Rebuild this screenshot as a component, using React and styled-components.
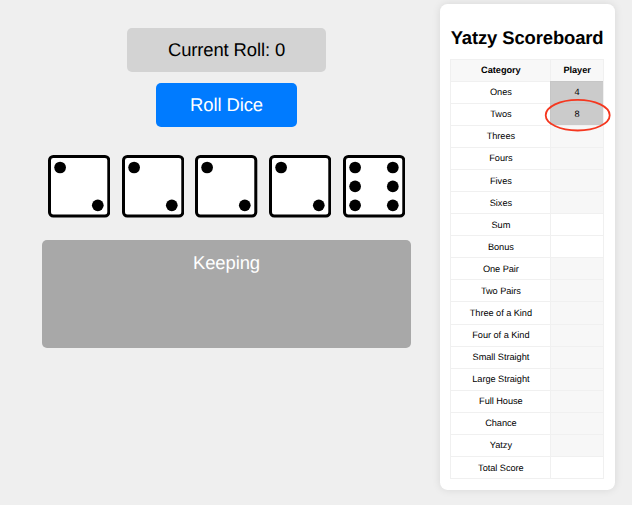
import React from "react";
import styled, { createGlobalStyle } from "styled-components";

const GlobalStyle = createGlobalStyle`
  *, *::before, *::after { box-sizing: border-box; }
  body {
    margin: 0;
    background: #efefef;
    color: #000;
    font-family: "Liberation Sans", Arial, Helvetica, sans-serif;
    text-rendering: geometricPrecision;
  }
`;

const Page = styled.div`
  display: flex;
  align-items: flex-start;
  width: 632px;
  height: 505px;
  overflow: hidden;
  background: #efefef;
`;

const Game = styled.main`
  display: flex;
  flex-direction: column;
  align-items: center;
  width: 369px;
  margin: 28.3px 28.5px 0 42px;
`;

const RollCounter = styled.div`
  width: 199px;
  height: 43.7px;
  border-radius: 5px;
  background: #d3d3d3;
  font-size: 18.46px;
  letter-spacing: -0.12px;
  line-height: 44px;
  text-align: center;
`;

const RollButton = styled.button`
  width: 141px;
  height: 44px;
  margin-top: 11px;
  padding: 0;
  border: 0;
  border-radius: 5px;
  background: #007bff;
  color: #fff;
  font: 18.46px/44px "Liberation Sans", Arial, sans-serif;
  letter-spacing: -0.1px;
  text-rendering: inherit;
`;

const DiceRow = styled.div`
  display: flex;
  gap: 11.5px;
  margin-top: 28px;
`;

const DieFace = styled.svg`
  display: block;
  width: 62.3px;
  height: 62.6px;
`;

const Keeping = styled.section`
  width: 100%;
  height: 108px;
  margin-top: 22.7px;
  padding-top: 12px;
  border-radius: 5px;
  background: #a8a8a8;
  color: #fff;
  font-size: 18.46px;
  letter-spacing: -0.1px;
  line-height: 21px;
  text-align: center;
`;

const Scoreboard = styled.aside`
  width: 175.3px;
  height: 486.3px;
  margin-top: 4px;
  padding: 23px 11px 0 10.9px;
  border-radius: 7.4px;
  background: #fff;
  box-shadow: 0 0 9px rgba(0, 0, 0, 0.1);
`;

const Title = styled.h1`
  margin: 0;
  height: 31.6px;
  font-size: 18.46px;
  letter-spacing: -0.12px;
  line-height: 22px;
  text-align: center;
  white-space: nowrap;
`;

const Table = styled.div`
  border: solid #f0f0f0;
  border-width: 0 1px 1px 0;
`;

const Row = styled.div`
  display: grid;
  grid-template-columns: 100px 1fr;
  height: 22.08px;
  font-size: 9.23px;
  letter-spacing: -0.05px;
  font-weight: ${({ $header }) => ($header ? 700 : 400)};
`;

const fills = { header: "#f8f8f8", open: "#f7f7f7", scored: "#cbcbcb", plain: "#fff" };

const Cell = styled.div`
  position: relative;
  display: flex;
  align-items: center;
  justify-content: center;
  border: solid ${({ $fill }) => ($fill === "scored" ? "#c6c6c6" : "#f0f0f0")};
  border-width: 1px 0 0 1px;
  background: ${({ $fill }) => fills[$fill]};
`;

const Highlight = styled.svg`
  position: absolute;
  z-index: 1;
  left: -7px;
  top: -8px;
  width: 68px;
  height: 36px;
  overflow: visible;
`;

const pips = {
  2: [[12.1, 12.5], [49.8, 50.3]],
  6: [[12.1, 12.5], [12.1, 31.4], [12.1, 50.3], [49.8, 12.5], [49.8, 31.4], [49.8, 50.3]],
};

const scores = [
  ["Ones", "4", "scored"],
  ["Twos", "8", "scored", true],
  ["Threes", "", "open"],
  ["Fours", "", "open"],
  ["Fives", "", "open"],
  ["Sixes", "", "open"],
  ["Sum", "", "plain"],
  ["Bonus", "", "plain"],
  ["One Pair", "", "open"],
  ["Two Pairs", "", "open"],
  ["Three of a Kind", "", "open"],
  ["Four of a Kind", "", "open"],
  ["Small Straight", "", "open"],
  ["Large Straight", "", "open"],
  ["Full House", "", "open"],
  ["Chance", "", "open"],
  ["Yatzy", "", "open"],
  ["Total Score", "", "plain"],
];

function Die({ value }) {
  return (
    <DieFace viewBox="0 0 62.3 62.6">
      <rect x="1.5" y="1.5" width="59.3" height="59.6" rx="3.8" fill="#fff" stroke="#000" strokeWidth="3" />
      {pips[value].map(([x, y]) => (
        <circle key={`${x}-${y}`} cx={x} cy={y} r="5.85" />
      ))}
    </DieFace>
  );
}

export default function App() {
  return (
    <Page>
      <GlobalStyle />
      <Game>
        <RollCounter>Current Roll: 0</RollCounter>
        <RollButton>Roll Dice</RollButton>
        <DiceRow>
          {[2, 2, 2, 2, 6].map((value, i) => (
            <Die key={i} value={value} />
          ))}
        </DiceRow>
        <Keeping>Keeping</Keeping>
      </Game>
      <Scoreboard>
        <Title>Yatzy Scoreboard</Title>
        <Table>
          <Row $header>
            <Cell $fill="header">Category</Cell>
            <Cell $fill="header">Player</Cell>
          </Row>
          {scores.map(([name, score, fill, highlighted]) => (
            <Row key={name}>
              <Cell $fill="plain">{name}</Cell>
              <Cell $fill={fill}>
                {score}
                {highlighted && (
                  <Highlight viewBox="0 0 68 36">
                    <ellipse cx="33.7" cy="19.2" rx="32" ry="15.3" fill="none" stroke="#f5371f" strokeWidth="1.8" />
                  </Highlight>
                )}
              </Cell>
            </Row>
          ))}
        </Table>
      </Scoreboard>
    </Page>
  );
}
